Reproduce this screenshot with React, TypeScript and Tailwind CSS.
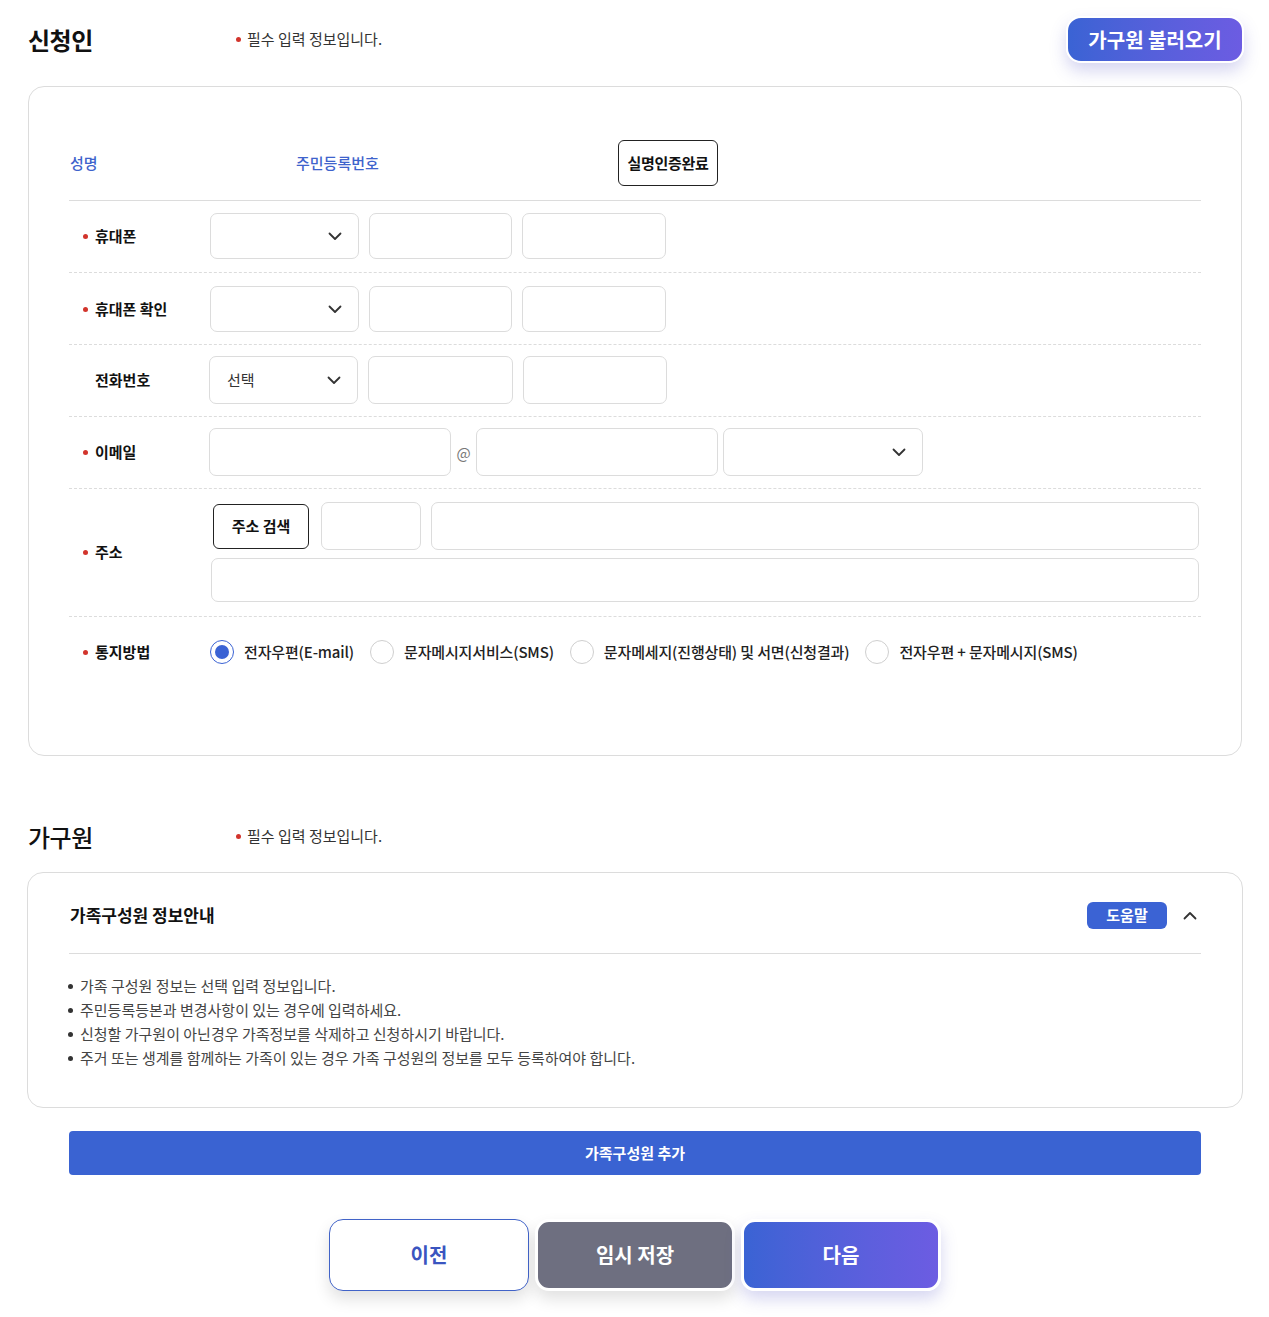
import React from "react";

const Chevron = ({ up = false }: { up?: boolean }) => (
    <svg width="14" height="9" viewBox="0 0 14 9" fill="none" className={up ? "rotate-180" : ""}>
        <path d="M1.5 1.5L7 7L12.5 1.5" stroke="#333" strokeWidth="1.8" strokeLinecap="round" strokeLinejoin="round" />
    </svg>
);

const Select = ({ w, h = "h-[46px]", text = "" }: { w: string; h?: string; text?: string }) => (
    <div className={`${w} ${h} flex items-center justify-between rounded-[7px] border border-[#dcdcdc] bg-white pl-[17px] pr-[16px] text-[15px] text-[#333]`}>
        <span>{text}</span>
        <Chevron />
    </div>
);

const Input = ({ w, h = "h-[46px]" }: { w: string; h?: string }) => (
    <div className={`${w} ${h} rounded-[7px] border border-[#dcdcdc] bg-white`} />
);

const Label = ({ text, req = true }: { text: string; req?: boolean }) => (
    <div className="flex w-[141px] shrink-0 items-center pl-[14px] text-[15px] font-bold text-[#111]">
        <span className={`mr-[7px] h-[5px] w-[5px] rounded-full ${req ? "bg-[#d2342c]" : "bg-transparent"}`} />
        {text}
    </div>
);

const Radio = ({ label, checked = false }: { label: string; checked?: boolean }) => (
    <div className="flex items-center gap-[10px]">
        <span className={`flex h-[24px] w-[24px] items-center justify-center rounded-full border ${checked ? "border-[#3b63d4]" : "border-[#cfcfcf]"} bg-white`}>
            {checked && <span className="h-[14px] w-[14px] rounded-full bg-[#3b63d4]" />}
        </span>
        <span className="text-[15px] font-medium tracking-[-0.15px] text-[#222]">{label}</span>
    </div>
);

const SectionHead = ({ title, bold = false, children }: { title: string; bold?: boolean; children?: React.ReactNode }) => (
    <div className="flex h-[45px] items-center justify-between">
        <div className="flex items-center">
            <h2 className={`w-[208px] text-[24px] tracking-[-0.5px] text-[#111] ${bold ? "font-bold" : "font-medium"}`}>{title}</h2>
            <p className="flex items-center text-[15px] text-[#333]">
                <span className="mr-[6px] h-[5px] w-[5px] rounded-full bg-[#d2342c]" />
                필수 입력 정보입니다.
            </p>
        </div>
        {children}
    </div>
);

export default function App() {
    return (
        <div className="min-h-screen bg-white pb-[26px] pl-[28px] pr-[27px] pt-[17px] font-['Noto_Sans_CJK_KR','Noto_Sans',sans-serif]">
            <SectionHead title="신청인" bold>
                <button className="mr-[-2px] flex h-[47px] w-[178px] items-center justify-center rounded-[15px] border-[2px] border-white bg-gradient-to-r from-[#3a63d4] to-[#6c5ce2] text-[20px] font-bold text-white shadow-[0_8px_16px_rgba(90,90,200,0.25)]">
                    가구원 불러오기
                </button>
            </SectionHead>

            <div className="mt-[24px] rounded-[16px] border border-[#dcdcdc] px-[40px] pb-[91px] pt-[53px]">
                <div className="flex items-center border-b border-[#dcdcdc] pb-[14px]">
                    <span className="w-[227px] pl-[1px] text-[15px] font-medium text-[#3e63cc]">성명</span>
                    <span className="w-[322px] text-[15px] font-medium text-[#3e63cc]">주민등록번호</span>
                    <button className="flex h-[46px] w-[100px] items-center justify-center rounded-[6px] border border-[#222] text-[15px] font-bold tracking-[-0.3px] text-[#111]">
                        실명인증완료
                    </button>
                </div>

                <div className="flex items-center border-b border-dashed border-[#dcdcdc] pb-[13px] pt-[12px]">
                    <Label text="휴대폰" />
                    <div className="flex gap-[10px]">
                        <Select w="w-[149px]" />
                        <Input w="w-[143px]" />
                        <Input w="w-[144px]" />
                    </div>
                </div>

                <div className="flex items-center border-b border-dashed border-[#dcdcdc] pb-[12px] pt-[13px]">
                    <Label text="휴대폰 확인" />
                    <div className="flex gap-[10px]">
                        <Select w="w-[149px]" />
                        <Input w="w-[143px]" />
                        <Input w="w-[144px]" />
                    </div>
                </div>

                <div className="flex items-center border-b border-dashed border-[#dcdcdc] pb-[12px] pt-[11px]">
                    <Label text="전화번호" req={false} />
                    <div className="-ml-px flex gap-[10px]">
                        <Select w="w-[149px]" h="h-[48px]" text="선택" />
                        <Input w="w-[145px]" h="h-[48px]" />
                        <Input w="w-[144px]" h="h-[48px]" />
                    </div>
                </div>

                <div className="flex items-center border-b border-dashed border-[#dcdcdc] pb-[12px] pt-[11px]">
                    <Label text="이메일" />
                    <div className="-ml-px flex items-center">
                        <Input w="w-[242px]" h="h-[48px]" />
                        <span className="w-[25px] pt-[2px] text-center text-[15px] text-[#777]">@</span>
                        <Input w="w-[242px]" h="h-[48px]" />
                        <div className="ml-[5px]">
                            <Select w="w-[200px]" h="h-[48px]" />
                        </div>
                    </div>
                </div>

                <div className="flex items-center border-b border-dashed border-[#dcdcdc] pb-[14px] pt-[13px]">
                    <Label text="주소" />
                    <div className="flex flex-1 flex-col gap-[8px] pr-[2px]">
                        <div className="flex items-center gap-[12px]">
                            <button className="ml-[3px] flex h-[45px] w-[96px] items-center justify-center rounded-[6px] border border-[#222] text-[15px] font-bold text-[#111]">
                                주소 검색
                            </button>
                            <Input w="w-[100px]" h="h-[48px]" />
                            <div className="-ml-[2px] flex-1">
                                <Input w="w-full" h="h-[48px]" />
                            </div>
                        </div>
                        <div className="ml-px">
                            <Input w="w-full" h="h-[44px]" />
                        </div>
                    </div>
                </div>

                <div className="flex items-center pt-[23px]">
                    <Label text="통지방법" />
                    <div className="flex items-center gap-[16px]">
                        <Radio label="전자우편(E-mail)" checked />
                        <Radio label="문자메시지서비스(SMS)" />
                        <Radio label="문자메세지(진행상태) 및 서면(신청결과)" />
                        <Radio label="전자우편 + 문자메시지(SMS)" />
                    </div>
                </div>
            </div>

            <div className="mt-[58px]">
                <SectionHead title="가구원" />
            </div>

            <div className="mx-[-1px] mt-[13px] rounded-[16px] border border-[#dcdcdc] px-[41px] pb-[37px] pt-[27px]">
                <div className="flex h-[30px] items-center justify-between">
                    <h3 className="pl-px text-[17px] font-bold text-[#111]">가족구성원 정보안내</h3>
                    <div className="flex items-center gap-[16px] pr-[4px]">
                        <span className="flex h-[27px] w-[80px] items-center justify-center rounded-[6px] bg-[#3b63d4] text-[15px] font-bold text-white">
                            도움말
                        </span>
                        <Chevron up />
                    </div>
                </div>
                <div className="mt-[23px] border-t border-[#dcdcdc] pt-[20px]">
                    <ul className="text-[15px] leading-[24px] text-[#444]">
                        {[
                            "가족 구성원 정보는 선택 입력 정보입니다.",
                            "주민등록등본과 변경사항이 있는 경우에 입력하세요.",
                            "신청할 가구원이 아닌경우 가족정보를 삭제하고 신청하시기 바랍니다.",
                            "주거 또는 생계를 함께하는 가족이 있는 경우 가족 구성원의 정보를 모두 등록하여야 합니다.",
                        ].map((t, i) => (
                            <li key={i} className="flex items-center">
                                <span className="ml-[-1px] mr-[7px] h-[5px] w-[5px] rounded-full bg-[#333]" />
                                {t}
                            </li>
                        ))}
                    </ul>
                </div>
            </div>

            <div className="mx-[41px] mt-[23px] flex h-[44px] items-center justify-center rounded-[4px] bg-[#3a63d2] text-[15px] font-bold text-white">
                가족구성원 추가
            </div>

            <div className="mt-[44px] flex justify-center gap-[6px]">
                <button className="flex h-[72px] w-[200px] items-center justify-center rounded-[14px] border border-[#4163c8] bg-white text-[20px] font-bold text-[#3a55c0] shadow-[0_8px_16px_rgba(0,0,0,0.12)]">
                    이전
                </button>
                <button className="flex h-[72px] w-[200px] items-center justify-center rounded-[14px] border-[3px] border-white bg-[#6e6f80] text-[20px] font-bold text-white shadow-[0_8px_16px_rgba(0,0,0,0.12)]">
                    임시 저장
                </button>
                <button className="flex h-[72px] w-[200px] items-center justify-center rounded-[14px] border-[3px] border-white bg-gradient-to-r from-[#3a63d4] to-[#6c5ce2] text-[20px] font-bold text-white shadow-[0_8px_16px_rgba(90,90,200,0.25)]">
                    다음
                </button>
            </div>
        </div>
    );
}
